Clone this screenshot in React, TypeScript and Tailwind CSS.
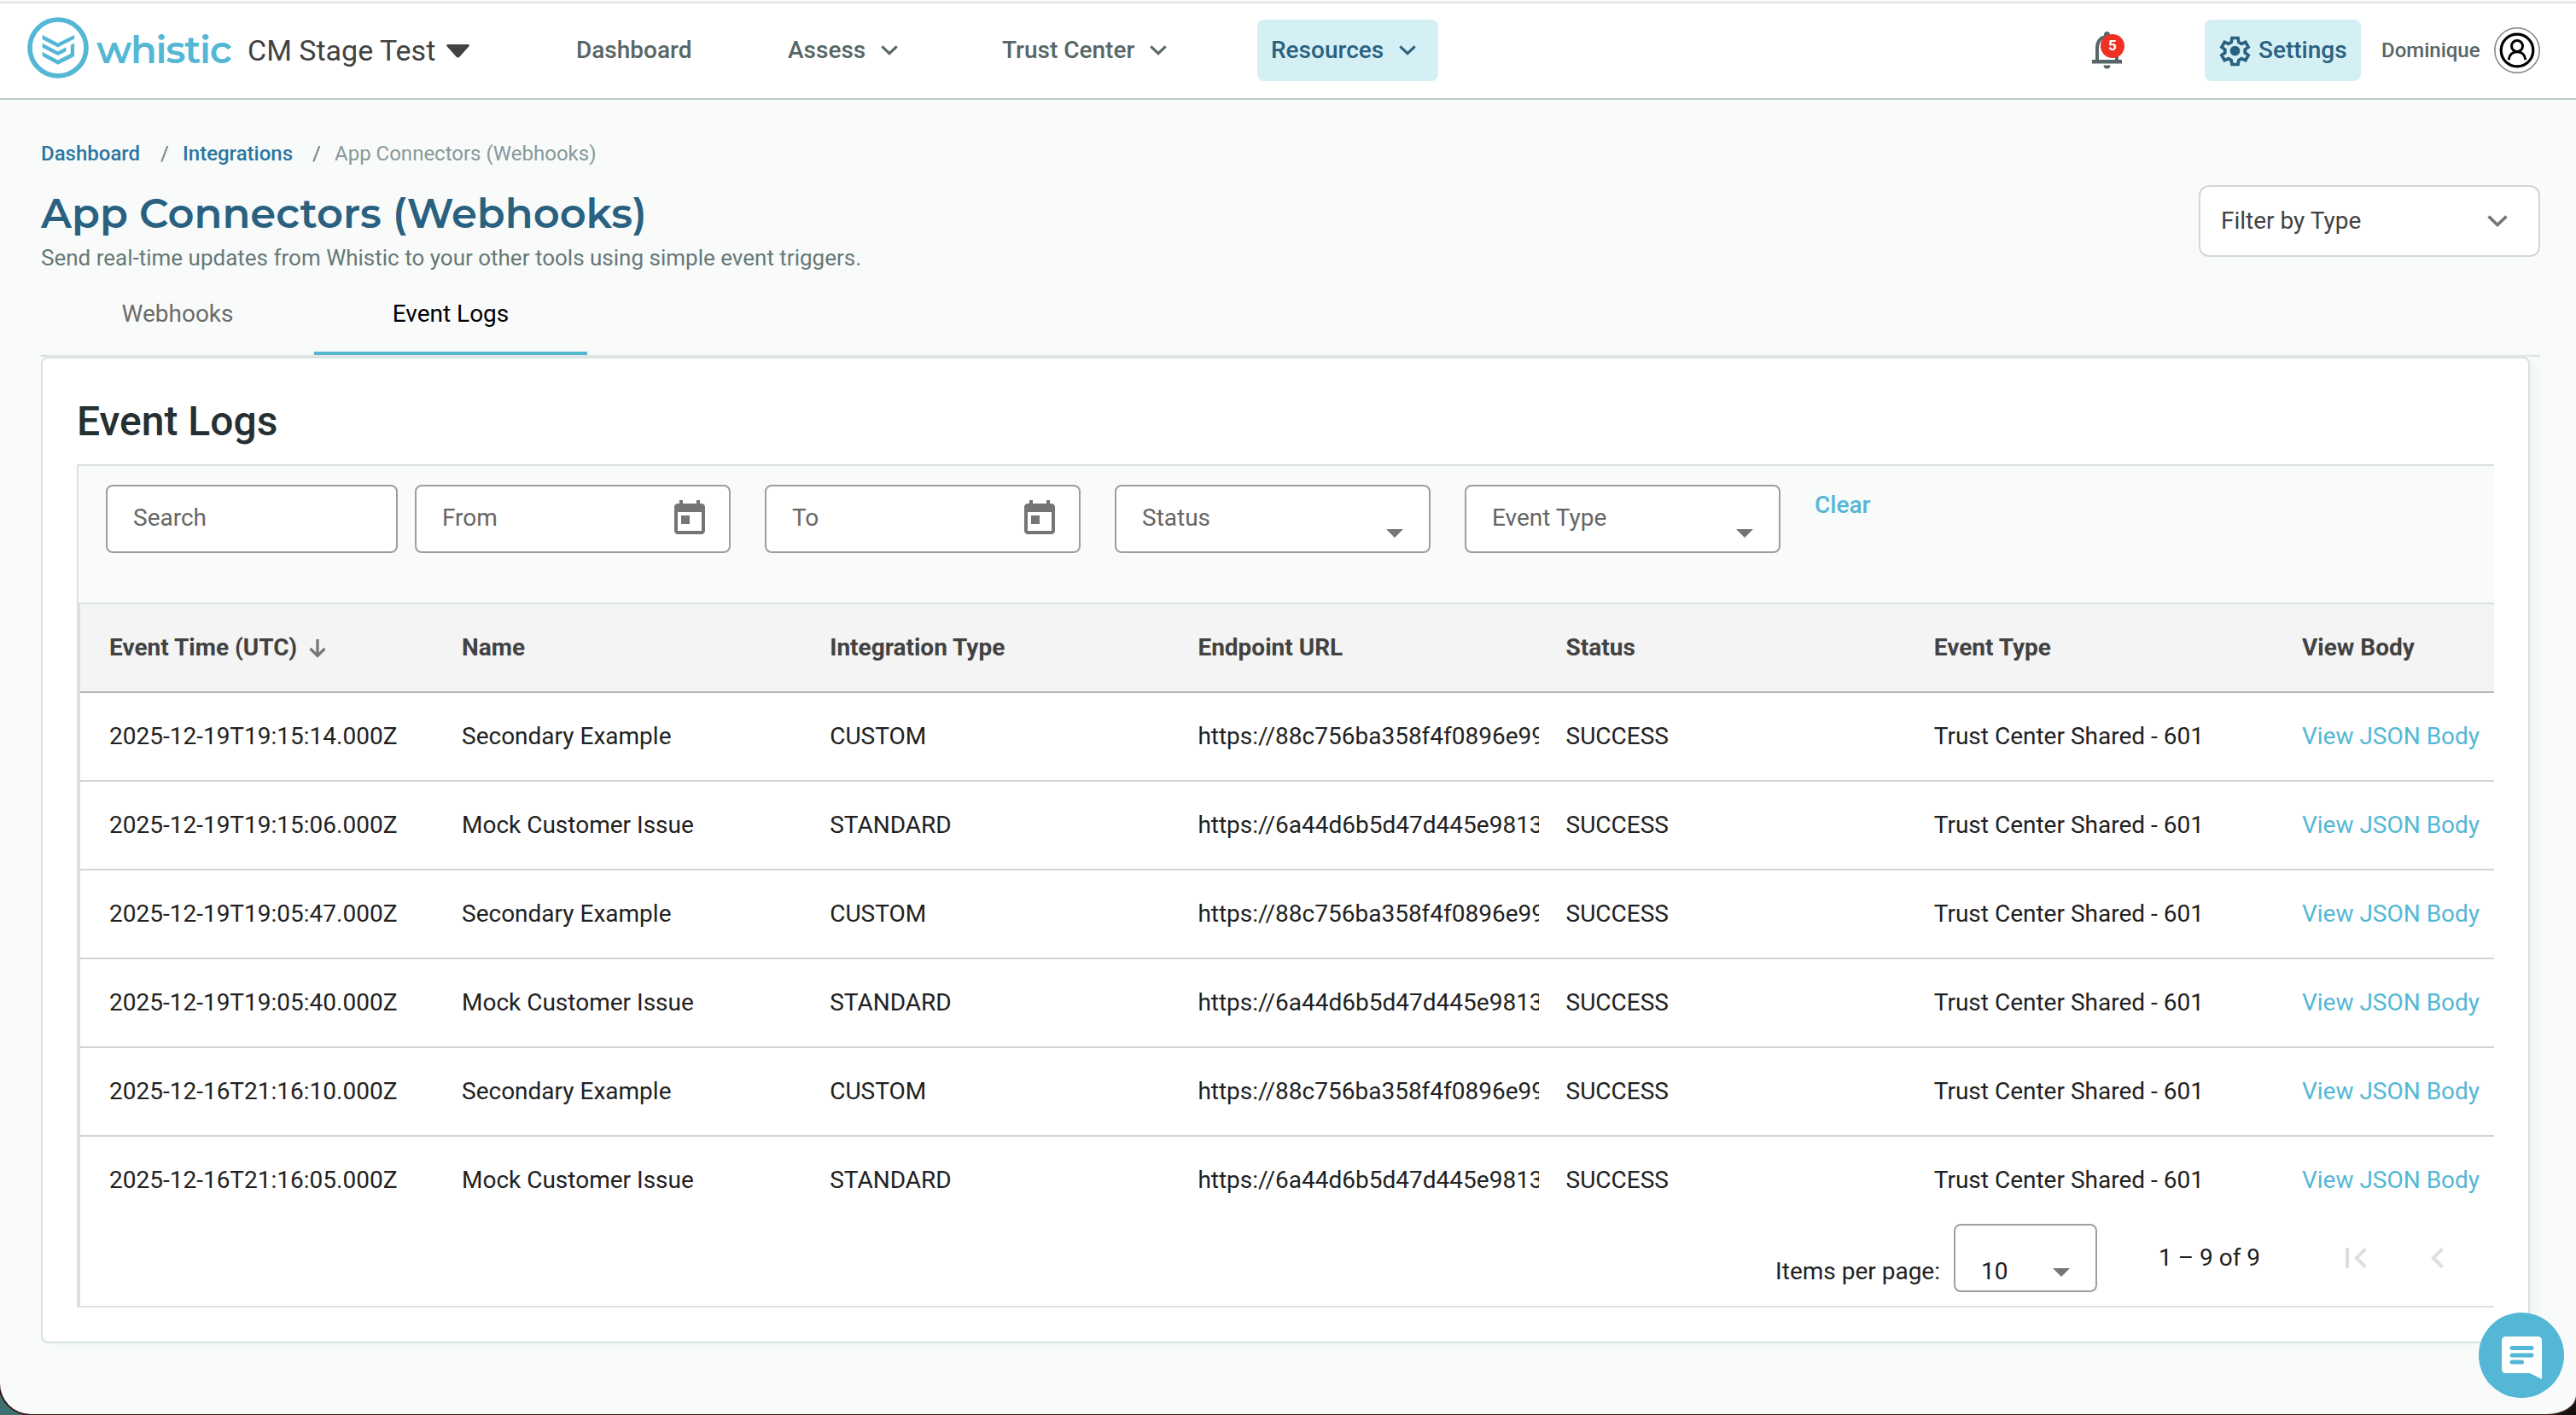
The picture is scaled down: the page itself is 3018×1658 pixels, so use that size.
import React from 'react';

interface EventLog {
  time: string;
  name: string;
  type: string;
  url: string;
}

const SECONDARY_URL = 'https://88c756ba358f4f0896e99';
const MOCK_URL = 'https://6a44d6b5d47d445e9813';

const logs: EventLog[] = [
  { time: '2025-12-19T19:15:14.000Z', name: 'Secondary Example', type: 'CUSTOM', url: SECONDARY_URL },
  { time: '2025-12-19T19:15:06.000Z', name: 'Mock Customer Issue', type: 'STANDARD', url: MOCK_URL },
  { time: '2025-12-19T19:05:47.000Z', name: 'Secondary Example', type: 'CUSTOM', url: SECONDARY_URL },
  { time: '2025-12-19T19:05:40.000Z', name: 'Mock Customer Issue', type: 'STANDARD', url: MOCK_URL },
  { time: '2025-12-16T21:16:10.000Z', name: 'Secondary Example', type: 'CUSTOM', url: SECONDARY_URL },
  { time: '2025-12-16T21:16:05.000Z', name: 'Mock Customer Issue', type: 'STANDARD', url: MOCK_URL },
];

const columns = ['Name', 'Integration Type', 'Endpoint URL', 'Status', 'Event Type'];

const Chevron: React.FC<{ className?: string }> = ({ className }) => (
  <svg viewBox="0 0 20 12" className={className} fill="none" stroke="currentColor" strokeWidth="3">
    <path d="M1.3 1.3 10 9.6l8.7-8.3" />
  </svg>
);

const Caret: React.FC<{ className?: string }> = ({ className }) => (
  <svg viewBox="0 0 20 10" className={className} fill="#757575">
    <path d="M0 0h20L10 10z" />
  </svg>
);

const CalendarIcon = () => (
  <svg viewBox="0 0 24 24" className="size-12" fill="#757575">
    <path d="M19 3h-1V1h-2v2H8V1H6v2H5c-1.11 0-1.99.9-1.99 2L3 19c0 1.1.89 2 2 2h14c1.1 0 2-.9 2-2V5c0-1.1-.9-2-2-2zm0 16H5V8h14v11zM7 10h5v5H7z" />
  </svg>
);

const Header = () => (
  <header className="mt-[2px] border-y-2 border-t-[#e0e0e0] border-b-[#b9c9ca] bg-white">
    <div className="flex h-[111px] items-center pb-px pl-8 pr-[42px] font-medium text-[#576666] text-[28px]">
      <svg viewBox="35 29 217 217" className="mb-[6px] size-[72px]" fill="#54b7d5">
        <circle cx="143.5" cy="137.5" r="99.5" fill="none" stroke="#54b7d5" strokeWidth="17" />
        <path d="M88 92l55 29 58-29v14l-58 30-55-29zM88 122l55 28 29-15v15l-29 15-55-28zM88 152l55 29 45-23v-30l13-7v47l-58 29-55-30z" />
      </svg>
      <span className="mb-[3px] ml-[9px] w-[170px] whitespace-nowrap font-[Montserrat,sans-serif] text-[45px] font-semibold leading-none tracking-[-1.3px] text-[#54b7d5]">whistic</span>
      <span className="ml-[7px] w-[233px] whitespace-nowrap text-[34px] font-normal text-[#424242]">CM Stage Test</span>
      <svg viewBox="0 0 27 16" className="mt-[2px] h-4 w-[27px]" fill="#424242">
        <path d="M2 0h23q3 0 1.200 2.500L15.500 14.500q-2 2-4 0L.8 2.500Q-1 0 2 0z" />
      </svg>
      <nav className="ml-[125px] flex items-center">
        <span className="w-[248px]">Dashboard</span>
        <span className="w-[109px]">Assess</span>
        <Chevron className="w-5" />
        <span className="ml-[122px] w-[173px]">Trust Center</span>
        <Chevron className="w-5" />
        <div className="ml-[106px] flex h-[72px] w-[212px] items-center rounded-lg bg-[#d5f0f5] pl-4 text-[#2a6180]">
          <span className="w-[150px]">Resources</span>
          <Chevron className="w-5" />
        </div>
      </nav>
      <div className="relative ml-auto h-11 w-[35px]">
        <svg viewBox="0 0 35 44" className="h-11 w-[35px]" fill="#576666">
          <path d="M0 33h4V20C4 11 8 6 14 4.500V3.500a3.500 3.500 0 0 1 7 0v1C27 6 31 11 31 20v13h4v4.500H0zM8 33h19V20c0-8-4-12-9.500-12S8 12 8 20zM13.500 39.500h8a4 4 0 0 1-8 0z" />
        </svg>
        <span className="absolute left-[10px] top-[3px] flex size-7 items-center justify-center rounded-full bg-[#ee3124] text-[17px] font-bold text-white">5</span>
      </div>
      <div className="ml-[97px] flex h-[72px] w-[183px] items-center rounded-lg bg-[#d5f0f5] pl-4 text-[#2a6180]">
        <svg viewBox="2 2 20 20" className="size-[39px]" fill="none" stroke="currentColor" strokeWidth="1.9">
          <path d="M10.200 4.300h3.600l.4 2.500 1.700 1 2.400-1 1.700 3-2 1.500v1.900l2 1.500-1.700 3-2.400-1-1.700 1-.4 2.500h-3.600l-.4-2.500-1.700-1-2.400 1-1.700-3 2-1.500v-1.900l-2-1.500 1.700-3 2.400 1 1.700-1z" />
          <circle cx="12" cy="12" r="3" fill="currentColor" stroke="none" />
        </svg>
        <span className="ml-[8px]">Settings</span>
      </div>
      <span className="ml-6 w-[132px] text-2xl">Dominique</span>
      <svg viewBox="0 0 54 54" className="size-[54px]" fill="none" stroke="#000">
        <circle cx="27" cy="27" r="26.200" stroke="#808080" strokeWidth="1.500" />
        <circle cx="27" cy="27" r="18.800" strokeWidth="3.200" />
        <circle cx="27" cy="22" r="6.500" strokeWidth="3" />
        <path d="M17.200 38c.6-5.800 4.500-9.300 9.800-9.300s9.200 3.500 9.800 9.300" strokeWidth="3" />
      </svg>
    </div>
  </header>
);

const Field: React.FC<{ label: string; className: string; children?: React.ReactNode }> = ({ label, className, children }) => (
  <div className={`flex h-20 justify-between rounded-lg border-2 border-[#9e9e9e] bg-white pl-[30px] leading-[74px] text-[#666] ${className}`}>
    <span>{label}</span>
    {children}
  </div>
);

const Filters = () => (
  <div className="flex h-[160px] bg-[#f9fbfa] pl-8 pt-[22px]">
    <Field label="Search" className="w-[342px]" />
    <Field label="From" className="ml-5 w-[370px] pr-[22px]">
      <div className="pt-[14px]"><CalendarIcon /></div>
    </Field>
    <Field label="To" className="ml-10 w-[370px] pr-[22px]">
      <div className="pt-[14px]"><CalendarIcon /></div>
    </Field>
    <Field label="Status" className="ml-10 w-[370px] pr-[30px]">
      <Caret className="mt-[50px] h-[10px] w-5" />
    </Field>
    <Field label="Event Type" className="ml-10 w-[370px] pr-[30px]">
      <Caret className="mt-[50px] h-[10px] w-5" />
    </Field>
    <span className="ml-10 mt-[5px] font-medium leading-[38px] text-[#54b7d5]">Clear</span>
  </div>
);

const LogTable = () => (
  <div>
    <div className="flex h-[104px] items-center border-b-2 border-[#b5b5b5] bg-[#f4f4f4] font-bold text-[#424242]">
      <div className="flex w-[447px] items-center pl-[34px]">
        Event Time (UTC)
        <svg viewBox="0 0 20 22" className="ml-[14px] mt-[2px] h-[22px] w-5" fill="none" stroke="#757575" strokeWidth="3.200">
          <path d="M10 0v20M1.500 11 10 19.500 18.500 11" />
        </svg>
      </div>
      {columns.map(c => (
        <div key={c} className="w-[431.2px]">{c}</div>
      ))}
      <div>View Body</div>
    </div>
    {logs.map((log, i) => (
      <div
        key={log.time}
        className={`flex h-[104px] items-center border-b-2 whitespace-nowrap text-[#212121] ${i < logs.length - 1 ? 'border-[#d3d3d3]' : 'border-transparent'}`}
      >
        <div className="w-[447px] pl-[34px]">{log.time}</div>
        <div className="w-[431.2px]">{log.name}</div>
        <div className="w-[431.2px]">{log.type}</div>
        <div className="mr-8 w-[399.2px] overflow-hidden">{log.url}</div>
        <div className="w-[431.2px]">SUCCESS</div>
        <div className="w-[431.2px]">Trust Center Shared - 601</div>
        <div className="text-[#54b7d5]">View JSON Body</div>
      </div>
    ))}
  </div>
);

const Paginator = () => (
  <div className="-mt-[2px] flex h-24 items-start justify-end pr-[42px] leading-9 text-[#212121]">
    <span className="mt-[38px]">Items per page:</span>
    <div className="ml-4 flex h-20 w-[168px] justify-between rounded-lg border-2 border-[#9e9e9e] px-[30px] pt-9">
      <span>10</span>
      <Caret className="mt-[14px] h-[10px] w-5" />
    </div>
    <span className="ml-[72px] mt-[22px] w-[207px]">1 – 9 of 9</span>
    <svg viewBox="0 0 24 24" className="mt-4 size-12" fill="#dedede">
      <path d="M18.410 16.590L13.820 12l4.590-4.590L17 6l-6 6 6 6zM6 6h2v12H6z" />
    </svg>
    <svg viewBox="0 0 24 24" className="ml-12 mt-4 size-12" fill="#dedede">
      <path d="M15.410 7.410L14 6l-6 6 6 6 1.410-1.410L10.830 12z" />
    </svg>
  </div>
);

export default function App() {
  return (
    <div className="h-[1658px] w-[3018px] overflow-hidden bg-linear-to-r from-[#3f6f70] from-1% to-[#15100e] to-3% font-[Roboto,sans-serif] text-[28px]">
      <div className="relative h-[1657px] overflow-hidden rounded-bl-[36px] bg-[#f9fbfa] shadow-[0_0_0_2px_#33191a] [border-bottom-right-radius:34px_22px]">
        <Header />
        <main className="pl-12 pr-[42px]">
          <div className="flex justify-between pt-[49px]">
            <div>
              <div className="flex text-2xl leading-7">
                <span className="w-[140px] font-medium text-[#2c75a0]">Dashboard</span>
                <span className="w-[26px] text-[#6c8080]">/</span>
                <span className="w-[152px] font-medium text-[#2c75a0]">Integrations</span>
                <span className="w-[26px] text-[#6c8080]">/</span>
                <span className="text-[#85999a]">App Connectors (Webhooks)</span>
              </div>
              <h1 className="mt-[26px] font-[Montserrat,sans-serif] text-[48px] font-semibold leading-[60px] text-[#2a6180]">App Connectors (Webhooks)</h1>
              <p className="mt-1 text-[26px] leading-9 text-[#667878]">Send real-time updates from Whistic to your other tools using simple event triggers.</p>
            </div>
            <div className="mt-[51px] flex h-[84px] w-[400px] items-center justify-between rounded-xl border-2 border-[#d3d6d6] bg-white pl-6 pr-9 text-[#424242]">
              Filter by Type
              <Chevron className="w-6 text-[#757575]" />
            </div>
          </div>
          <div className="flex h-[98px] border-b-2 border-[#d9dcdc] text-center leading-[96px]">
            <div className="w-80 text-[#6b6b6b]">Webhooks</div>
            <div className="w-80 border-b-4 border-[#54b7d0] text-black">Event Logs</div>
          </div>
          <section className="h-[1156px] w-[2916px] rounded-lg border-2 border-[#d9e1e2] bg-white pl-10 pt-[42px] shadow-[6px_0_12px_#f1f5f7]">
            <h2 className="text-[48px] font-medium leading-[64px] text-[#263033]">Event Logs</h2>
            <div className="mt-[18px] h-[988px] w-[2832px] border-2 border-r-0 border-[#d9e1e2]">
              <Filters />
              <div className="h-[824px] border-l-2 border-t-2 border-[#d9e1e2]">
                <LogTable />
                <Paginator />
              </div>
            </div>
          </section>
        </main>
        <button className="absolute left-[2904px] top-[1538px] flex size-[100px] items-center justify-center rounded-full bg-[#54b7d5]">
          <svg viewBox="0 0 47 50" className="mt-[6px] h-[50px] w-[47px]">
            <path d="M5 0h37q5 0 5 5v45l-14-7H5q-5 0-5-5V5q0-5 5-5z" fill="#fff" />
            <path d="M12 13.500h23M12 22h23M12 30h11.500" stroke="#54b7d5" strokeWidth="5" strokeLinecap="round" />
          </svg>
        </button>
      </div>
    </div>
  );
}
